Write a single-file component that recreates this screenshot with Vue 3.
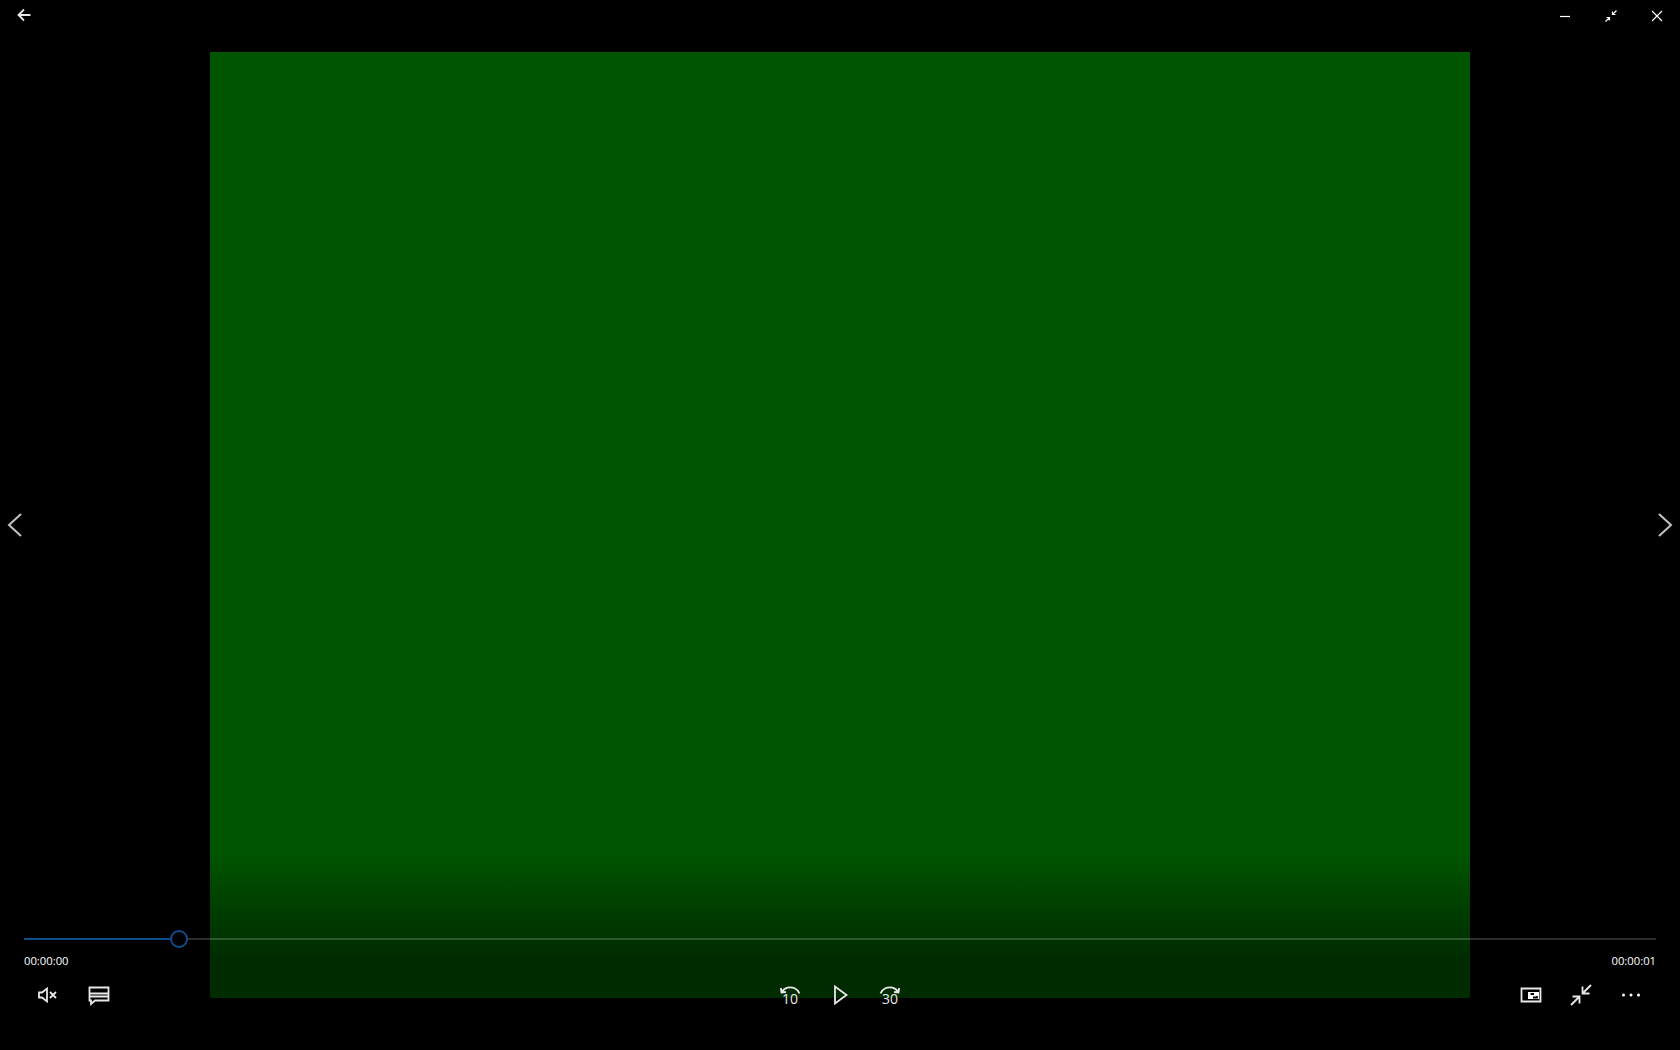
<template>
  <div class="player">
    <div class="stage">
      <div class="video"></div>
    </div>

    <div class="titlebar">
      <button class="back" aria-label="Back">
        <svg width="14" height="14" viewBox="0 0 14 14"><path d="M7 1.500 1.500 7 7 12.500M1.500 7H13.500" /></svg>
      </button>
      <div class="window-btns">
        <button aria-label="Minimize">
          <svg width="12" height="12" viewBox="0 0 12 12"><path d="M1 6.500H11" /></svg>
        </button>
        <button aria-label="Exit full screen">
          <svg width="12" height="12" viewBox="0 0 12 12"><path d="M11.500.5 7.500 4.500M7.500 1.500V4.500H10.500M.5 11.500 4.500 7.500M1.500 7.500H4.500V10.500" /></svg>
        </button>
        <button aria-label="Close">
          <svg width="12" height="12" viewBox="0 0 12 12"><path d="M1 1 11 11M11 1 1 11" /></svg>
        </button>
      </div>
    </div>

    <button class="nav nav-prev" aria-label="Previous">
      <svg width="16" height="26" viewBox="0 0 16 26"><path d="M14 2 2 13 14 24" /></svg>
    </button>
    <button class="nav nav-next" aria-label="Next">
      <svg width="16" height="26" viewBox="0 0 16 26"><path d="M2 2 14 13 2 24" /></svg>
    </button>

    <div class="controls">
      <div class="slider">
        <div class="track">
          <div class="fill" :style="{ width: progress + 'px' }"></div>
          <div class="thumb" :style="{ left: progress + 'px' }"></div>
        </div>
      </div>
      <div class="times">
        <span>{{ current }}</span>
        <span>{{ total }}</span>
      </div>
      <div class="buttons">
        <div class="group">
          <button aria-label="Unmute">
            <svg width="24" height="24" viewBox="0 0 24 24">
              <path d="M2 9.500V14.500H5L10 18.500V5.500L5 9.500Z" />
              <path d="M13 9 19 15M19 9 13 15" />
            </svg>
          </button>
          <button aria-label="Subtitles">
            <svg width="24" height="24" viewBox="0 0 24 24">
              <path d="M2.500 4.500H21.500V17.500H8L4 21V17.500H2.500Z" />
              <path d="M3 10.500H21M3 13.500H21" />
            </svg>
          </button>
        </div>
        <div class="group center">
          <button aria-label="Back 10 seconds">
            <svg width="24" height="24" viewBox="0 0 24 24">
              <path d="M21.500 10.500C19.500 5.500 14.500 3.500 9.500 4.700 7 5.300 5 7 3.500 9.500M2.800 5 3.500 9.500 8 9" />
            </svg>
            <span class="skip">10</span>
          </button>
          <button aria-label="Play">
            <svg width="24" height="24" viewBox="0 0 24 24"><path d="M7 3.500V20.500L18.500 12Z" /></svg>
          </button>
          <button aria-label="Forward 30 seconds">
            <svg width="24" height="24" viewBox="0 0 24 24">
              <path d="M2.500 10.500C4.500 5.500 9.500 3.500 14.500 4.700 17 5.300 19 7 20.500 9.500M21.200 5 20.500 9.500 16 9" />
            </svg>
            <span class="skip">30</span>
          </button>
        </div>
        <div class="group end">
          <button aria-label="Mini view">
            <svg width="24" height="24" viewBox="0 0 24 24">
              <path d="M2.500 5.500H21.500V18.500H2.500Z" />
              <path class="solid" d="M9 9H20V16H9Z" />
              <path class="cut" d="M11.500 11H15M18 13V14.500H14" />
            </svg>
          </button>
          <button aria-label="Exit full screen">
            <svg width="24" height="24" viewBox="0 0 24 24">
              <path d="M22 2 13.500 10.500M13.500 3.500V10.500H20.500M2 22 10.500 13.500M3.500 13.500H10.500V20.500" />
            </svg>
          </button>
          <button aria-label="More">
            <svg width="24" height="24" viewBox="0 0 24 24">
              <circle class="solid" cx="4.500" cy="12" r="1.500" />
              <circle class="solid" cx="12" cy="12" r="1.500" />
              <circle class="solid" cx="19.500" cy="12" r="1.500" />
            </svg>
          </button>
        </div>
      </div>
    </div>
  </div>
</template>

<script setup>
const progress = 155
const current = '00:00:00'
const total = '00:00:01'
</script>

<style>
html,
body {
  background: #000;
  overflow: hidden;
}
</style>

<style scoped>
.player {
  position: relative;
  height: 1050px;
  background: #000;
  overflow: hidden;
  font-family: "Open Sans", "Liberation Sans", sans-serif;
  color: #fff;
}
.stage {
  display: flex;
  height: 100%;
  box-sizing: border-box;
  padding: 52px 210px;
}
.video {
  flex: 1;
  background: #005500;
}
button {
  display: flex;
  align-items: center;
  justify-content: center;
  padding: 0;
  border: 0;
  background: none;
  color: inherit;
  font: inherit;
}
svg path {
  fill: none;
  stroke: #e8e8e8;
  stroke-width: 1.8;
}
svg .solid {
  fill: #fff;
  stroke: none;
}
svg .cut {
  stroke: #000;
}
.titlebar {
  position: absolute;
  top: 0;
  left: 0;
  right: 0;
  display: flex;
  justify-content: space-between;
  height: 32px;
}
.back {
  width: 48px;
  height: 30px;
}
.window-btns {
  display: flex;
}
.window-btns button {
  width: 46px;
  height: 32px;
}
.window-btns svg path {
  stroke: #fff;
  stroke-width: 1.2;
}
.nav {
  position: absolute;
  top: 512px;
}
.nav svg path {
  stroke: #c4c4c4;
  stroke-width: 2;
}
.nav-prev {
  left: 7px;
}
.nav-next {
  right: 7px;
}
.controls {
  position: absolute;
  left: 0;
  right: 0;
  bottom: 0;
  height: 200px;
  box-sizing: border-box;
  padding: 88px 24px 0;
  background: linear-gradient(to bottom, rgba(0, 0, 0, 0), rgba(0, 0, 0, 0.5) 55%);
}
.slider {
  height: 2px;
}
.track {
  position: relative;
  height: 2px;
  background: rgba(255, 255, 255, 0.18);
}
.fill {
  height: 100%;
  background: #0f4c8a;
}
.thumb {
  position: absolute;
  top: -8px;
  width: 18px;
  height: 18px;
  box-sizing: border-box;
  margin-left: -9px;
  border: 2px solid #0f4c8a;
  border-radius: 50%;
  background: #000;
}
.times {
  display: flex;
  justify-content: space-between;
  margin-top: 13px;
  font-size: 11.250px;
  line-height: 16px;
  color: #fff;
}
.buttons {
  display: grid;
  grid-template-columns: 1fr auto 1fr;
  margin-top: 1px;
}
.group {
  display: flex;
}
.group.end {
  justify-content: flex-end;
}
.group button {
  position: relative;
  width: 50px;
  height: 50px;
}
.skip {
  position: absolute;
  left: 0;
  right: 0;
  top: 21px;
  font-size: 14px;
  line-height: 16px;
  text-align: center;
  color: #e8e8e8;
}
</style>
